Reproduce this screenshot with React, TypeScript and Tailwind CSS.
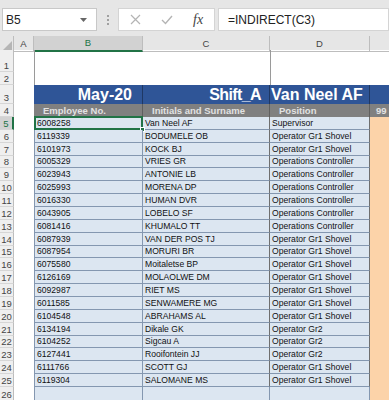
import React from "react";

const rows: [number, string, string, string][] = [
  [5, "6008258", "Van Neel AF", "Supervisor"],
  [6, "6119339", "BODUMELE OB", "Operator Gr1 Shovel"],
  [7, "6101973", "KOCK BJ", "Operator Gr1 Shovel"],
  [8, "6005329", "VRIES GR", "Operations Controller"],
  [9, "6023943", "ANTONIE LB", "Operations Controller"],
  [10, "6025993", "MORENA DP", "Operations Controller"],
  [11, "6016330", "HUMAN DVR", "Operations Controller"],
  [12, "6043905", "LOBELO SF", "Operations Controller"],
  [13, "6081416", "KHUMALO TT", "Operations Controller"],
  [14, "6087939", "VAN DER POS TJ", "Operator Gr1 Shovel"],
  [15, "6087954", "MORURI BR", "Operator Gr1 Shovel"],
  [16, "6075580", "Moitaletse BP", "Operator Gr1 Shovel"],
  [17, "6126169", "MOLAOLWE DM", "Operator Gr1 Shovel"],
  [18, "6092987", "RIET MS", "Operator Gr1 Shovel"],
  [19, "6011585", "SENWAMERE MG", "Operator Gr1 Shovel"],
  [20, "6104548", "ABRAHAMS AL", "Operator Gr1 Shovel"],
  [21, "6134194", "Dikale GK", "Operator Gr2"],
  [22, "6104252", "Sigcau A", "Operator Gr2"],
  [23, "6127441", "Rooifontein JJ", "Operator Gr2"],
  [24, "6111766", "SCOTT GJ", "Operator Gr1 Shovel"],
  [25, "6119304", "SALOMANE MS", "Operator Gr1 Shovel"],
];

const grid = "grid grid-cols-[14px_20px_109px_127px_100px_1fr]";

function RowHead({ n, selected }: { n: number | string; selected?: boolean }) {
  return (
    <div
      className={
        "flex items-end justify-center border-b border-[#d6d6d6] text-[9.5px] leading-[11px] " +
        (selected
          ? "bg-[#d2d2d2] text-[#217346] border-r-2 border-r-[#217346]"
          : "bg-[#efefef] text-[#444] border-r border-r-[#bdbdbd]")
      }
    >
      {n}
    </div>
  );
}

export default function App() {
  return (
    <div
      className="w-[389px] h-[400px] overflow-hidden bg-white"
      style={{ fontFamily: '"Liberation Sans", Arial, sans-serif' }}
    >
      {/* formula bar */}
      <div className="h-[36px] bg-[#e6e6e6] flex items-start pt-[8px] pl-[2px]">
        <div className="w-[95px] h-[23px] bg-white border border-[#c8c8c8] flex items-center justify-between pl-[3px] pr-[9px]">
          <span className="text-[12px] text-[#222]">B5</span>
          <svg width="7" height="4" viewBox="0 0 7 4">
            <path d="M0 0 L7 0 L3.5 4 Z" fill="#666" />
          </svg>
        </div>
        <div className="w-[21px] h-[23px] flex flex-col items-center justify-center gap-[2px]">
          <span className="w-[2px] h-[2px] bg-[#a0a0a0]" />
          <span className="w-[2px] h-[2px] bg-[#a0a0a0]" />
          <span className="w-[2px] h-[2px] bg-[#a0a0a0]" />
        </div>
        <div className="w-[97px] h-[23px] bg-white border border-[#d4d4d4] flex items-center">
          <div className="w-[34px] flex justify-center">
            <svg width="11" height="11" viewBox="0 0 11 11">
              <path d="M1 1 L10 10 M10 1 L1 10" stroke="#b4b4b4" strokeWidth="1.2" />
            </svg>
          </div>
          <div className="w-[30px] flex justify-center">
            <svg width="12" height="10" viewBox="0 0 12 10">
              <path d="M1 5 L4.5 8.5 L11 1" stroke="#b4b4b4" strokeWidth="1.4" fill="none" />
            </svg>
          </div>
          <div className="w-[32px] flex justify-center">
            <span
              className="italic text-[14px] text-[#444]"
              style={{ fontFamily: '"Liberation Serif", "Times New Roman", serif' }}
            >
              fx
            </span>
          </div>
        </div>
        <div className="ml-[3px] flex-1 h-[23px] bg-white border border-[#d4d4d4] flex items-center pl-[9px]">
          <span className="text-[12px] text-[#222]">=INDIRECT(C3)</span>
        </div>
      </div>

      {/* column headers */}
      <div className={grid + " h-[14px] bg-[#e6e6e6] text-[9.5px] text-[#444]"}>
        <div className="border-r border-[#bdbdbd] border-b border-b-[#bdbdbd] flex items-end justify-end pr-[1px] pb-[1px]">
          <svg width="9" height="9" viewBox="0 0 9 9">
            <path d="M9 0 L9 9 L0 9 Z" fill="#b5b5b5" />
          </svg>
        </div>
        <div className="border-r border-[#bdbdbd] border-b border-b-[#bdbdbd] flex items-center justify-center">A</div>
        <div className="bg-[#d2d2d2] border-r border-[#bdbdbd] border-b-2 border-b-[#217346] flex items-center justify-center text-[#217346]">B</div>
        <div className="border-r border-[#bdbdbd] border-b border-b-[#bdbdbd] flex items-center justify-center">C</div>
        <div className="border-r border-[#bdbdbd] border-b border-b-[#bdbdbd] flex items-center justify-center">D</div>
        <div className="border-b border-b-[#bdbdbd]" />
      </div>

      {/* rows 1-2 */}
      <div className={grid + " h-[22px]"}>
        <RowHead n={1} />
        <div />
        <div className="col-span-2 border-l border-[#9a9a9a]" />
        <div className="border-l border-[#9a9a9a]" />
        <div />
      </div>
      <div className={grid + " h-[13px]"}>
        <RowHead n={2} />
        <div />
        <div className="col-span-2 border-l border-[#9a9a9a]" />
        <div className="border-l border-[#9a9a9a]" />
        <div />
      </div>

      {/* row 3 */}
      <div className={grid + " h-[19px]"}>
        <RowHead n={3} />
        <div />
        <div className="col-span-4 bg-[#2f5597] flex text-white font-bold text-[16px] leading-[19px] overflow-hidden whitespace-nowrap">
          <div className="w-[109px] shrink-0 border-r border-[#1f3864] text-right pr-[10px]">May-20</div>
          <div className="w-[127px] shrink-0 border-r border-[#1f3864] text-right pr-[8px] tracking-[-0.6px]">Shift_A</div>
          <div className="w-[100px] shrink-0 border-r border-[#1f3864] pl-[1px] overflow-visible">Van Neel AF</div>
          <div className="flex-1" />
        </div>
      </div>

      {/* row 4 */}
      <div className={grid + " h-[13px]"}>
        <RowHead n={4} />
        <div />
        <div className="col-span-4 bg-[#808080] flex text-[#e2e2e2] font-bold text-[9.5px] leading-[13px] overflow-hidden whitespace-nowrap">
          <div className="w-[109px] shrink-0 border-r border-[#5f5f5f] pl-[9px]">Employee No.</div>
          <div className="w-[127px] shrink-0 border-r border-[#5f5f5f] pl-[9px]">Initials and Surname</div>
          <div className="w-[100px] shrink-0 border-r border-[#5f5f5f] pl-[9px]">Position</div>
          <div className="flex-1 pl-[6px]">99</div>
        </div>
      </div>

      {/* data rows */}
      {rows.map(([n, id, name, pos]) => {
        const sel = n === 5;
        return (
          <div key={n} className={grid + " h-[12.86px]"}>
            <RowHead n={n} selected={sel} />
            <div />
            <div className="relative bg-[#dce6f1] border-b border-r border-l border-[#8497b0] text-[8.6px] leading-[11px] text-[#111] pl-[2px] flex items-end whitespace-nowrap">
              {id}
              {sel && (
                <>
                  <span className="absolute -left-[1px] -top-[1px] -right-[1px] -bottom-[1px] border-2 border-[#217346]" />
                  <span className="absolute -right-[3px] -bottom-[3px] w-[5px] h-[5px] bg-[#217346] border border-white" />
                </>
              )}
            </div>
            <div className="bg-[#dce6f1] border-b border-r border-[#8497b0] border-r-[#6f6f6f] text-[8.6px] leading-[11px] text-[#111] pl-[2px] flex items-end whitespace-nowrap overflow-hidden">
              {name}
            </div>
            <div className="bg-[#dce6f1] border-b border-r border-[#8497b0] border-r-[#6f6f6f] text-[8.6px] leading-[11px] text-[#111] pl-[2px] flex items-end whitespace-nowrap overflow-hidden">
              {pos}
            </div>
            <div className="bg-[#fcd3a9]" />
          </div>
        );
      })}

      {/* row 26 */}
      <div className={grid + " h-[14px]"}>
        <RowHead n={26} />
        <div />
        <div className="bg-[#dce6f1] border-l border-r border-[#8497b0]" />
        <div className="bg-[#dce6f1] border-r border-[#8497b0]" />
        <div className="bg-[#dce6f1] border-r border-[#8497b0]" />
        <div className="bg-[#fcd3a9]" />
      </div>
    </div>
  );
}
